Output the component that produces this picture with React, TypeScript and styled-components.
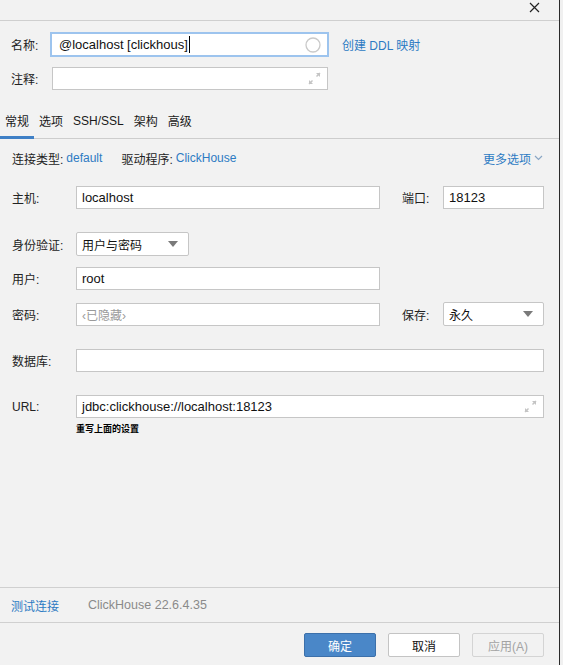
import React from "react";
import styled, { createGlobalStyle } from "styled-components";

const GlobalStyle = createGlobalStyle`
  html, body { margin: 0; padding: 0; background: #f2f2f2; }
  body {
    font-family: "Liberation Sans", "Noto Sans CJK SC", sans-serif;
    font-size: 12px;
    color: #222;
  }
  * { box-sizing: border-box; }
`;

const Window = styled.div`
  width: 563px;
  height: 665px;
  display: flex;
  background: #f2f2f2;
`;

const Main = styled.div`
  width: 559px;
  height: 100%;
  display: flex;
  flex-direction: column;
`;

const EdgeLine = styled.div`
  width: 1px;
  height: 100%;
  background: #2a2a2a;
`;

const EdgeFill = styled.div`
  flex: 1;
  height: 100%;
  background: #f0f0f0;
`;

const TitleBar = styled.div`
  height: 21px;
  border-bottom: 1px solid #cfcfcf;
  display: flex;
  justify-content: flex-end;
  align-items: flex-start;
  padding: 2px 19px 0 0;
`;

const Header = styled.div`
  padding: 11px 0 0 11px;
  display: flex;
  flex-direction: column;
`;

const HeaderRow = styled.div<{ $mt?: number }>`
  display: flex;
  align-items: center;
  margin-top: ${(p) => p.$mt ?? 0}px;
`;

const HeaderLabel = styled.span`
  width: 41px;
  font-size: 12px;
  color: #222;
`;

const NameBox = styled.div`
  margin-left: -2px;
  width: 279px;
  height: 25px;
  border: 2px solid #9dc4ee;
  background: #fff;
  display: flex;
  align-items: center;
  padding: 0 6px 0 7px;
  font-size: 13px;
  color: #111;
`;

const Caret = styled.span`
  display: inline-block;
  width: 1px;
  height: 17px;
  background: #000;
  margin-left: 1px;
`;

const Grow = styled.span`
  flex: 1;
`;

const BoxTextGrow = styled.span`
  flex: 1;
  display: flex;
  align-items: center;
  white-space: nowrap;
`;

const LinkText = styled.span<{ $ml?: number }>`
  color: #2d7bc3;
  font-size: 12px;
  margin-left: ${(p) => p.$ml ?? 0}px;
  white-space: nowrap;
`;

const TextBox = styled.div<{ $w?: number; $grow?: boolean }>`
  ${(p) => (p.$w ? `width: ${p.$w}px;` : "")}
  ${(p) => (p.$grow ? "flex: 1;" : "")}
  height: 23px;
  border: 1px solid #c6c6c6;
  background: #fff;
  display: flex;
  align-items: center;
  padding: 0 6px 0 5px;
  font-size: 13px;
  color: #111;
  white-space: nowrap;
`;

const Placeholder = styled.span`
  color: #9a9a9a;
  font-size: 12px;
`;

const TabBar = styled.div`
  margin-top: 21px;
  height: 28px;
  border-bottom: 1px solid #cdcdcd;
  display: flex;
  align-items: stretch;
`;

const Tab = styled.div<{ $active?: boolean }>`
  padding: 0 5px 6px;
  display: flex;
  align-items: center;
  font-size: 12px;
  color: #1a1a1a;
  border-bottom: 3px solid ${(p) => (p.$active ? "#3f80c6" : "transparent")};
  margin-bottom: -1px;
`;

const InfoRow = styled.div`
  margin-top: 10px;
  height: 18px;
  padding: 0 16px 0 12px;
  display: flex;
  align-items: center;
  font-size: 12px;
`;

const InfoLabel = styled.span<{ $ml?: number }>`
  color: #222;
  margin-left: ${(p) => p.$ml ?? 0}px;
  margin-right: 3px;
`;

const Form = styled.div`
  padding: 0 15px 0 12px;
  display: flex;
  flex-direction: column;
`;

const FormRow = styled.div<{ $mt: number }>`
  margin-top: ${(p) => p.$mt}px;
  display: flex;
  align-items: center;
`;

const FieldLabel = styled.span<{ $w?: number; $ml?: number }>`
  width: ${(p) => p.$w ?? 64}px;
  margin-left: ${(p) => p.$ml ?? 0}px;
  flex-shrink: 0;
  font-size: 12px;
  color: #222;
`;

const Select = styled.div<{ $w?: number; $grow?: boolean }>`
  ${(p) => (p.$w ? `width: ${p.$w}px;` : "")}
  ${(p) => (p.$grow ? "flex: 1;" : "")}
  height: 24px;
  border: 1px solid #c6c6c6;
  border-radius: 2px;
  background: #fff;
  display: flex;
  align-items: center;
  padding: 0 10px 0 5px;
  font-size: 12px;
  color: #111;
`;

const Arrow = styled.span`
  width: 0;
  height: 0;
  border-left: 5px solid transparent;
  border-right: 5px solid transparent;
  border-top: 6px solid #7a7a7a;
`;

const Hint = styled.div`
  margin: 5px 0 0 64px;
  font-size: 9px;
  font-weight: 700;
  color: #000;
  line-height: 12px;
`;

const Spacer = styled.div`
  flex: 1;
`;

const Footer = styled.div`
  height: 36px;
  border-top: 1px solid #d0d0d0;
  border-bottom: 1px solid #d0d0d0;
  display: flex;
  align-items: center;
  padding: 0 11px 0 11px;
  font-size: 12px;
`;

const Version = styled.span`
  margin-left: 29px;
  color: #8a8a8a;
  font-size: 12.5px;
`;

const ButtonBar = styled.div`
  display: flex;
  justify-content: flex-end;
  gap: 12px;
  padding: 10px 15px 8px 0;
`;

const Button = styled.div<{ $variant: "primary" | "normal" | "disabled" }>`
  width: 72px;
  height: 24px;
  border-radius: 2px;
  display: flex;
  align-items: center;
  justify-content: center;
  font-size: 12px;
  ${(p) =>
    p.$variant === "primary"
      ? "background: #4a87c8; border: 1px solid #3c70aa; color: #fff;"
      : p.$variant === "normal"
      ? "background: #fff; border: 1px solid #c4c4c4; color: #111;"
      : "background: #f2f2f2; border: 1px solid #d4d4d4; color: #a3a3a3;"}
`;

const CloseIcon = () => (
  <svg width="11" height="11" viewBox="0 0 11 11">
    <path d="M1 1L10 10M10 1L1 10" stroke="#222" strokeWidth="1.2" />
  </svg>
);

const CircleIcon = () => (
  <svg width="16" height="16" viewBox="0 0 16 16">
    <circle cx="8" cy="8" r="7" fill="none" stroke="#c9c9c9" strokeWidth="1.3" />
  </svg>
);

const ExpandIcon = () => (
  <svg width="13" height="13" viewBox="0 0 13 13">
    <path d="M8 1H12V5Z" fill="#c4c4c4" />
    <path d="M12 1L8.5 4.5" stroke="#c4c4c4" strokeWidth="1.4" />
    <path d="M1 8V12H5Z" fill="#c4c4c4" />
    <path d="M1 12L4.5 8.5" stroke="#c4c4c4" strokeWidth="1.4" />
  </svg>
);

const ChevronDown = () => (
  <svg width="9" height="6" viewBox="0 0 9 6" style={{ marginLeft: 3 }}>
    <path d="M1 1L4.5 4.5L8 1" fill="none" stroke="#8aa6c4" strokeWidth="1.2" />
  </svg>
);

export default function App() {
  return (
    <>
      <GlobalStyle />
      <Window>
        <Main>
          <TitleBar>
            <CloseIcon />
          </TitleBar>
          <Header>
            <HeaderRow>
              <HeaderLabel>名称:</HeaderLabel>
              <NameBox>
                <BoxTextGrow>
                  @localhost [clickhous]
                  <Caret />
                </BoxTextGrow>
                <CircleIcon />
              </NameBox>
              <LinkText $ml={13}>创建 DDL 映射</LinkText>
            </HeaderRow>
            <HeaderRow $mt={10}>
              <HeaderLabel>注释:</HeaderLabel>
              <TextBox $w={276}>
                <Grow />
                <ExpandIcon />
              </TextBox>
            </HeaderRow>
          </Header>
          <TabBar>
            <Tab $active>常规</Tab>
            <Tab>选项</Tab>
            <Tab>SSH/SSL</Tab>
            <Tab>架构</Tab>
            <Tab>高级</Tab>
          </TabBar>
          <InfoRow>
            <InfoLabel>连接类型:</InfoLabel>
            <LinkText>default</LinkText>
            <InfoLabel $ml={19}>驱动程序:</InfoLabel>
            <LinkText>ClickHouse</LinkText>
            <Grow />
            <LinkText>更多选项</LinkText>
            <ChevronDown />
          </InfoRow>
          <Form>
            <FormRow $mt={19}>
              <FieldLabel>主机:</FieldLabel>
              <TextBox $w={304}>localhost</TextBox>
              <FieldLabel $w={41} $ml={22}>端口:</FieldLabel>
              <TextBox $grow>18123</TextBox>
            </FormRow>
            <FormRow $mt={23}>
              <FieldLabel>身份验证:</FieldLabel>
              <Select $w={113}>
                用户与密码
                <Grow />
                <Arrow />
              </Select>
            </FormRow>
            <FormRow $mt={11}>
              <FieldLabel>用户:</FieldLabel>
              <TextBox $w={304}>root</TextBox>
            </FormRow>
            <FormRow $mt={12}>
              <FieldLabel>密码:</FieldLabel>
              <TextBox $w={304}>
                <Placeholder>‹已隐藏›</Placeholder>
              </TextBox>
              <FieldLabel $w={41} $ml={22}>保存:</FieldLabel>
              <Select $grow>
                永久
                <Grow />
                <Arrow />
              </Select>
            </FormRow>
            <FormRow $mt={23}>
              <FieldLabel>数据库:</FieldLabel>
              <TextBox $grow />
            </FormRow>
            <FormRow $mt={23}>
              <FieldLabel>URL:</FieldLabel>
              <TextBox $grow>
                jdbc:clickhouse://localhost:18123
                <Grow />
                <ExpandIcon />
              </TextBox>
            </FormRow>
            <Hint>重写上面的设置</Hint>
          </Form>
          <Spacer />
          <Footer>
            <LinkText>测试连接</LinkText>
            <Version>ClickHouse 22.6.4.35</Version>
          </Footer>
          <ButtonBar>
            <Button $variant="primary">确定</Button>
            <Button $variant="normal">取消</Button>
            <Button $variant="disabled">应用(A)</Button>
          </ButtonBar>
        </Main>
        <EdgeLine />
        <EdgeFill />
      </Window>
    </>
  );
}
